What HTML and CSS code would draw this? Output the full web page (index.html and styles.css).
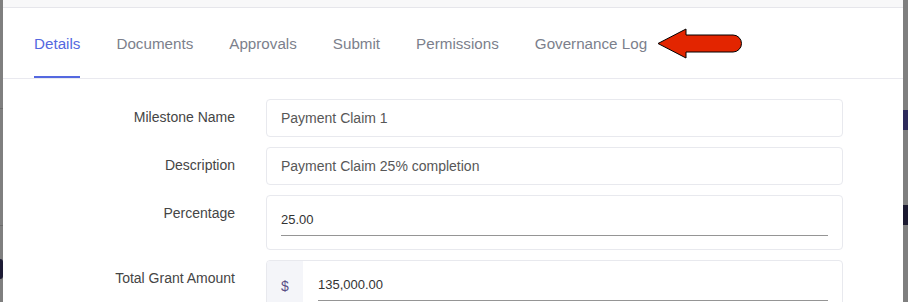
FILE: index.html
```html
<!DOCTYPE html>
<html lang="en">
<head>
    <meta charset="UTF-8">
    <meta name="viewport" content="width=device-width, initial-scale=1.0">
    <title>Milestone Details</title>
    <link rel="stylesheet" href="styles.css">
</head>
<body>
    <div class="screen">
        <div class="backdrop left">
            <div class="bd-line first"></div>
            <div class="bd-line second"></div>
            <div class="bd-blob"></div>
        </div>

        <div class="modal">
            <div class="modal-top"></div>

            <div class="tabs">
                <div class="tab active">Details</div>
                <div class="tab">Documents</div>
                <div class="tab">Approvals</div>
                <div class="tab">Submit</div>
                <div class="tab">Permissions</div>
                <div class="tab">Governance Log</div>

                <!-- annotation arrow pointing at the last tab -->
                <svg class="pointer-arrow" width="92" height="34" viewBox="0 0 92 34">
                    <path d="M4 16.5 L32 2 L32 8 L79 8 A8.5 8.5 0 0 1 79 25 L32 25 L32 31 Z" fill="#e32500" stroke="#000" stroke-width="1" stroke-linejoin="miter"/>
                </svg>
            </div>

            <div class="form">
                <label class="form-label">Milestone Name</label>
                <input class="form-input" type="text" value="Payment Claim 1" readonly>

                <label class="form-label">Description</label>
                <input class="form-input" type="text" value="Payment Claim 25% completion" readonly>

                <label class="form-label">Percentage</label>
                <div class="field-box">
                    <input class="line-input" type="text" value="25.00">
                </div>

                <label class="form-label">Total Grant Amount</label>
                <div class="field-box with-prefix">
                    <div class="prefix">$</div>
                    <div class="prefix-field">
                        <input class="line-input" type="text" value="135,000.00">
                    </div>
                </div>
            </div>
        </div>

        <div class="backdrop right">
            <div class="bd-block purple"></div>
            <div class="bd-block dark"></div>
        </div>
    </div>
</body>
</html>
```

FILE: styles.css
```css
* {
    margin: 0;
    padding: 0;
    box-sizing: border-box;
}

html, body {
    height: 302px;
    overflow: hidden;
}

body {
    font-family: "Liberation Sans", Arial, sans-serif;
    background-color: #7f7f7f;
}

.screen {
    display: flex;
    height: 302px;
}

/* dimmed page behind the modal */
.backdrop {
    background-color: #7f7f7f;
    display: flex;
    flex-direction: column;
}

.backdrop.left {
    width: 3px;
}

.backdrop.right {
    width: 5px;
}

.bd-line {
    height: 1px;
    background-color: #6c6c6c;
}

.bd-line.first {
    margin-top: 108px;
}

.bd-line.second {
    margin-top: 116px;
}

.bd-blob {
    margin-top: 33px;
    height: 20px;
    background-color: #1d1b34;
    border-radius: 0 10px 10px 0;
}

.bd-block {
    height: 20px;
}

.bd-block.purple {
    margin-top: 110px;
    background-color: #2e2b5b;
}

.bd-block.dark {
    margin-top: 75px;
    background-color: #1b1930;
}

.modal {
    width: 900px;
    background: white;
    position: relative;
}

.modal-top {
    height: 8px;
    background-color: #f8f8f9;
    border-bottom: 1px solid #e6e6eb;
}

.tabs {
    display: flex;
    height: 71px;
    padding-left: 31px;
    border-bottom: 1px solid #e9e9ef;
    position: relative;
}

.tab {
    font-size: 15.2px;
    line-height: 18px;
    color: #7c7f8c;
    padding-top: 27px;
    margin-right: 36px;
    height: 70px;
    cursor: pointer;
}

.tab.active {
    color: #5468e0;
    border-bottom: 2px solid #5468e0;
}

.pointer-arrow {
    position: absolute;
    left: 651px;
    top: 19px;
}

.form {
    display: grid;
    grid-template-columns: 232px 1fr;
    column-gap: 31px;
    row-gap: 10px;
    padding: 20px 60px 0 0;
}

.form-label {
    font-size: 14px;
    line-height: 16px;
    color: #454545;
    text-align: right;
    padding-top: 10px;
}

.form-input {
    height: 38px;
    border: 1px solid #e8e9ee;
    border-radius: 4px;
    padding: 0 14px;
    font-family: inherit;
    font-size: 14px;
    color: #575757;
    background: white;
    outline: none;
}

.field-box {
    border: 1px solid #e8e9ee;
    border-radius: 4px;
    padding: 14px 14px 13px 14px;
}

.field-box.with-prefix {
    display: flex;
    padding: 0;
    overflow: hidden;
}

.prefix {
    width: 36px;
    background-color: #f4f5f9;
    text-align: center;
    font-size: 14px;
    line-height: 16px;
    color: #5a4f86;
    padding-top: 17px;
}

.prefix-field {
    flex: 1;
    padding: 14px 14px 13px 15px;
}

.line-input {
    display: block;
    width: 100%;
    height: 26px;
    border: none;
    border-bottom: 1px solid #959595;
    padding: 1px 0 7px 0;
    font-family: inherit;
    font-size: 13px;
    color: #333;
    background: transparent;
    outline: none;
}
```
